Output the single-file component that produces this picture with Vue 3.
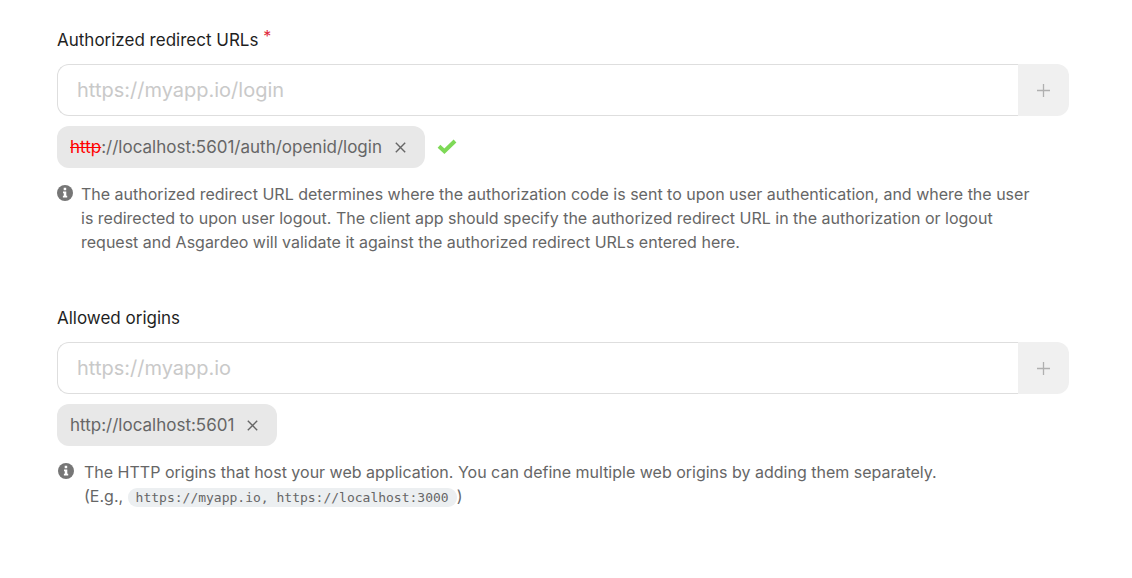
<script setup>
import { ref } from 'vue'

const redirectUrl = ref('')
const origin = ref('')
</script>

<template>
  <main class="form">
    <section class="field">
      <label class="label" for="redirect">Authorized redirect URLs <span class="required">*</span></label>
      <div class="entry">
        <input id="redirect" v-model="redirectUrl" type="text" placeholder="https://myapp.io/login" />
        <button class="add" type="button" aria-label="Add redirect URL">
          <svg width="13" height="13" viewBox="0 0 13 13"><path d="M6.5 0v13M0 6.5h13" /></svg>
        </button>
      </div>
      <div class="chips">
        <div class="chip">
          <span class="url"><s>http</s>://localhost:5601/auth/openid/login</span>
          <button class="remove" type="button" aria-label="Remove redirect URL">
            <svg width="11" height="11" viewBox="0 0 11 11"><path d="M.8.8l9.4 9.4M10.2.8L.8 10.2" /></svg>
          </button>
        </div>
        <svg class="check" width="20" height="17" viewBox="0 0 20 17"><path d="M2 7.3l5.4 5L18 2" /></svg>
      </div>
      <div class="hint">
        <svg class="info" width="16" height="16" viewBox="0 0 16 16">
          <circle cx="8" cy="8" r="8" />
          <path d="M6.7 2.8h2.5v2.4H6.7zM6 6.5h3.3v4.2h.9v1.7H5.9v-1.7h.9V8.2H6z" />
        </svg>
        <p>
          The authorized redirect URL determines where the authorization code is sent to upon user authentication, and where the user<br />
          is redirected to upon user logout. The client app should specify the authorized redirect URL in the authorization or logout<br />
          request and Asgardeo will validate it against the authorized redirect URLs entered here.
        </p>
      </div>
    </section>

    <section class="field">
      <label class="label" for="origin">Allowed origins</label>
      <div class="entry">
        <input id="origin" v-model="origin" type="text" placeholder="https://myapp.io" />
        <button class="add" type="button" aria-label="Add origin">
          <svg width="13" height="13" viewBox="0 0 13 13"><path d="M6.5 0v13M0 6.5h13" /></svg>
        </button>
      </div>
      <div class="chips">
        <div class="chip">
          <span class="url">http://localhost:5601</span>
          <button class="remove" type="button" aria-label="Remove origin">
            <svg width="11" height="11" viewBox="0 0 11 11"><path d="M.8.8l9.4 9.4M10.2.8L.8 10.2" /></svg>
          </button>
        </div>
      </div>
      <div class="hint wide">
        <svg class="info" width="16" height="16" viewBox="0 0 16 16">
          <circle cx="8" cy="8" r="8" />
          <path d="M6.7 2.8h2.5v2.4H6.7zM6 6.5h3.3v4.2h.9v1.7H5.9v-1.7h.9V8.2H6z" />
        </svg>
        <p>
          The HTTP origins that host your web application. You can define multiple web origins by adding them separately.<br />
          (E.g., <code>https://myapp.io, https://localhost:3000</code>)
        </p>
      </div>
    </section>
  </main>
</template>

<style>
body {
  margin: 0;
  background: #fff;
}
</style>

<style scoped>
.form {
  display: flex;
  flex-direction: column;
  gap: 52px;
  padding: 28px 63px 28px 57px;
  font-family: Inter, "Liberation Sans", sans-serif;
  font-size: 16px;
  color: #666;
}
.field {
  display: flex;
  flex-direction: column;
}
.label {
  line-height: 24px;
  margin-bottom: 12px;
  font-size: 17px;
  color: #1f1f1f;
}
.required {
  font-size: 16px;
  line-height: 1;
  vertical-align: 4px;
  color: #e0283c;
}
.entry {
  display: flex;
  height: 52px;
}
input {
  flex: 1;
  min-width: 0;
  box-sizing: border-box;
  padding: 0 19px;
  border: 1px solid #dedede;
  border-right: 0;
  border-radius: 12px 0 0 12px;
  background: #fff;
  font: inherit;
  font-size: 20px;
  color: #333;
  outline: none;
}
input::placeholder {
  color: #c9c9c9;
  opacity: 1;
}
button {
  display: flex;
  align-items: center;
  justify-content: center;
  padding: 0;
  border: 0;
  background: none;
  cursor: pointer;
}
.add {
  width: 51px;
  border-radius: 0 12px 12px 0;
  background: #f0f0f0;
}
.add path {
  stroke: #b0b0b0;
  stroke-width: 1.3;
}
.chips {
  display: flex;
  align-items: center;
  gap: 12px;
  margin-top: 10px;
}
.chip {
  display: flex;
  align-items: center;
  gap: 13px;
  height: 42px;
  box-sizing: border-box;
  padding: 0 19px 0 13px;
  border-radius: 12px;
  background: #e8e8e8;
  font-size: 17px;
}
s {
  color: #f00;
}
.remove path {
  stroke: #666;
  stroke-width: 1.4;
}
.check path {
  fill: none;
  stroke: #7ed957;
  stroke-width: 4;
}
.hint {
  display: flex;
  gap: 8px;
  margin-top: 14px;
  line-height: 24px;
}
.hint.wide {
  gap: 10px;
  padding-left: 1px;
}
.info {
  flex: none;
  margin-top: 3px;
}
.info circle {
  fill: #767676;
}
.info path {
  fill: #fff;
}
p {
  margin: 0;
  white-space: nowrap;
}
code {
  padding: 2px 8px;
  border-radius: 9px;
  background: #eceff1;
  font-family: "DejaVu Sans Mono", monospace;
  font-size: 13px;
}
</style>
